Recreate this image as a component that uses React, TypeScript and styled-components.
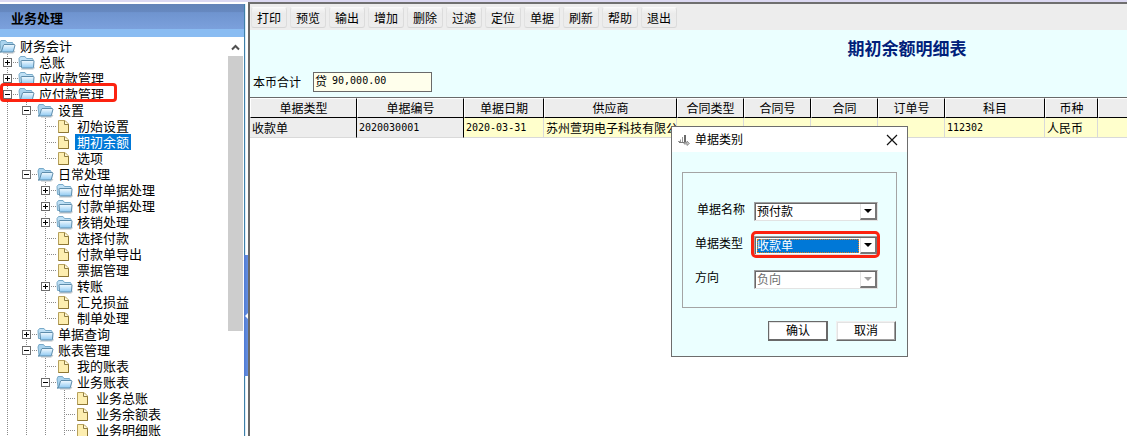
import React from "react";
import styled, { createGlobalStyle, css } from "styled-components";

const GlobalStyle = createGlobalStyle`
  * { box-sizing: border-box; }
  html, body, #root { height: 100%; }
  body {
    margin: 0;
    overflow: hidden;
    color: #000;
    background: #fff;
    font-family: "Liberation Sans", "Noto Sans CJK SC", sans-serif;
    font-size: 12px;
    line-height: 16px;
  }
  button, input, select { font: inherit; color: inherit; }
`;

const cjk = `"Noto Sans CJK SC", sans-serif`;
const mono = `"DejaVu Sans Mono", "Noto Sans CJK SC", monospace`;

const Page = styled.div`
  display: flex;
  height: 100%;
  min-height: 0;
  border-top: 2px solid #dcd9f2;
  font-family: ${cjk};
`;

/* ---------- sidebar ---------- */

const Sidebar = styled.aside`
  display: flex;
  flex: 0 0 244px;
  flex-direction: column;
  min-height: 0;
  padding-top: 2px;
`;

const SidebarTitle = styled.h2`
  flex: none;
  height: 33px;
  margin: 0;
  padding: 6px 11px;
  font-size: 13px;
  line-height: 16px;
  background: linear-gradient(#6384b8, #6688c0 24%, #6f94cf 26%, #7ba0dc 75%, #8abcf2 77%, #8abcf2);
`;

const TreePane = styled.div`
  display: flex;
  flex: 1;
  min-height: 0;
  padding-top: 1px;
`;

const Tree = styled.ul`
  flex: 1;
  min-width: 0;
  margin: 0 0 0 -1px;
  padding: 0;
  overflow: hidden;
  list-style: none;
`;

const TreeRow = styled.li`
  position: relative;
  display: flex;
  height: 16px;
  font-size: 13px;
  white-space: nowrap;
`;

const dots = "#8a8a8a";

const Guide = styled.span<{ $up?: boolean; $down?: boolean; $across?: boolean }>`
  display: grid;
  flex: 0 0 19px;
  align-items: center;
  padding-left: 4px;
  background-image:
    repeating-linear-gradient(${dots} 0 1px, transparent 1px 2px),
    repeating-linear-gradient(${dots} 0 1px, transparent 1px 2px),
    repeating-linear-gradient(90deg, ${dots} 0 1px, transparent 1px 2px);
  background-repeat: no-repeat;
  background-position: 8px 0, 8px 8px, 8px 8px;
  background-size:
    ${(p) => (p.$up ? "1px 8px" : "0 0")},
    ${(p) => (p.$down ? "1px 8px" : "0 0")},
    ${(p) => (p.$across ? "11px 1px" : "0 0")};
`;

const Toggle = styled.button`
  display: block;
  width: 9px;
  height: 9px;
  padding: 0;
  border: 0;
  background: #fff;
  svg { display: block; }
`;

const IconCell = styled.span`
  flex: 0 0 19px;
  svg { display: block; }
`;

const TreeLabel = styled.span<{ $selected?: boolean }>`
  padding: 0 2px;
  ${(p) => p.$selected && css`color: #fff; background: #0078d7;`}
`;

const RowMark = styled.span`
  position: absolute;
  z-index: 2;
  top: -3px;
  left: 1px;
  width: 117px;
  height: 19px;
  border: 3px solid #fc2310;
  border-radius: 4px;
`;

const ScrollTrack = styled.div`
  display: flex;
  flex: 0 0 16px;
  flex-direction: column;
  align-items: stretch;
  svg { display: block; height: 18px; }
`;

const ScrollThumb = styled.div`
  flex: 0 0 275px;
  margin-right: 1px;
  background: #cdcdcd;
`;

const Splitter = styled.div`
  display: flex;
  flex: 0 0 4px;
  flex-direction: column;
  margin-top: 2px;
  border-left: 1px solid #3d7fa8;
  background: linear-gradient(90deg, #dcecf8 1px, #fff 1px);
`;

const SplitterGrip = styled.button`
  display: grid;
  height: 121px;
  margin: 251px 0 0 -1px;
  padding: 0;
  place-items: center end;
  border: 0;
  background: linear-gradient(90deg, #4f7ad2, #6790e2);
`;

/* ---------- main ---------- */

const Main = styled.main`
  flex: 1;
  min-width: 0;
  overflow: hidden;
  border-top: 2px solid #6f6f6f;
  border-left: 2px solid #696969;
`;

const Toolbar = styled.nav`
  display: flex;
  gap: 3px;
  height: 26px;
  padding: 3px 1px;
  background: #ededed;
`;

const ToolButton = styled.button`
  width: 36px;
  height: 21px;
  padding: 0;
  border: 1px solid;
  border-color: #fafafa #dcdcdc #d6d6d6 #e2e2e2;
  border-radius: 3px;
  background: linear-gradient(#f6f6f6, #ebebeb 30%, #ededed);
  line-height: 16px;
`;

const Sheet = styled.div`
  min-width: 1314px;
`;

const SheetHead = styled.header`
  height: 67px;
  padding-top: 8px;
  background: #ebffff;
`;

const SheetTitle = styled.h1`
  margin: 0 0 14px;
  color: #00207a;
  font-size: 17px;
  line-height: 20px;
  text-align: center;
`;

const Summary = styled.label`
  display: flex;
  gap: 12px;
  height: 20px;
  padding-left: 3px;
  line-height: 20px;
`;

const AmountBox = styled.span`
  display: flex;
  gap: 5px;
  width: 119px;
  height: 20px;
  padding-left: 1px;
  border: 1px solid #6a6a6a;
  background: #ffffec;
  line-height: 15px;
`;

const AmountInput = styled.input`
  flex: 1;
  min-width: 0;
  height: 15px;
  padding: 0;
  border: 0;
  outline: 0;
  background: transparent;
  font-family: ${mono};
  font-size: 10px;
`;

const Grid = styled.table`
  width: 100%;
  table-layout: fixed;
  border-top: 1px solid #6a6a6a;
  border-spacing: 0;
  border-collapse: separate;
`;

const Col = styled.col<{ $width?: number }>`
  width: ${(p) => (p.$width ? `${p.$width}px` : "auto")};
`;

const HeadCell = styled.th`
  height: 20px;
  padding: 0;
  border: 1px solid;
  border-color: #fff #000 #000 #fff;
  background: #ededed;
  font-weight: 400;
  line-height: 16px;
`;

const Cell = styled.td<{ $fixed?: boolean; $code?: boolean }>`
  height: 20px;
  padding: 0 2px;
  overflow: hidden;
  border-right: 1px solid ${(p) => (p.$fixed ? "#000" : "#d9d9d9")};
  border-bottom: 1px solid #d9d9d9;
  background: ${(p) => (p.$fixed ? "#ededed" : "#ffffcc")};
  line-height: 16px;
  white-space: nowrap;
  ${(p) => p.$code && css`font-family: ${mono}; font-size: 10px;`}
`;

/* ---------- dialog ---------- */

const Dialog = styled.section`
  position: absolute;
  z-index: 5;
  top: 126px;
  left: 671px;
  width: 237px;
  border: 1px solid #6d6d6d;
  background: #ebffff;
`;

const DialogBar = styled.header`
  display: flex;
  align-items: center;
  height: 25px;
  padding: 0 9px 0 6px;
  background: #fff;
  h2 {
    flex: 1;
    margin: 0 0 0 5px;
    font-size: 12px;
    font-weight: 400;
  }
`;

const CloseButton = styled.button`
  display: grid;
  padding: 0;
  border: 0;
  background: none;
`;

const Fields = styled.div`
  display: flex;
  flex-direction: column;
  gap: 15px;
  height: 136px;
  margin: 20px 10px 13px;
  padding: 29px 18px 0 12px;
  border: 1px solid #a4a4a4;
`;

const Field = styled.div<{ $indent?: boolean }>`
  display: flex;
  align-items: flex-start;
  height: 19px;
  label {
    flex: 1;
    padding-left: ${(p) => (p.$indent ? "2px" : "0")};
  }
`;

const SelectFrame = styled.div<{ $marked?: boolean; $disabled?: boolean }>`
  position: relative;
  display: flex;
  width: 124px;
  height: 19px;
  border: 1px solid;
  border-color: #a0a0a0 #e3e3e3 #e3e3e3 #a0a0a0;
  background: #fff;
  box-shadow: inset 1px 1px 0 #696969;
  color: ${(p) => (p.$disabled ? "#6d6d6d" : "#000")};
  ${(p) =>
    p.$marked &&
    css`
      &::after {
        content: "";
        position: absolute;
        inset: -6px -3px -4px -4px;
        border: 3px solid #fc2310;
        border-radius: 5px;
        pointer-events: none;
      }
    `}
`;

const Select = styled.select<{ $active?: boolean }>`
  flex: 1;
  min-width: 0;
  margin: 2px 1px 1px 2px;
  padding: 0;
  border: 0;
  border-radius: 0;
  appearance: none;
  background: transparent;
  line-height: 14px;
  opacity: 1;
  &:disabled { color: #6d6d6d; }
  ${(p) => p.$active && css`
    color: #fff;
    background: #0078d7;
    outline: 1px dotted #e08020;
    outline-offset: -1px;
  `}
`;

const Arrow = styled.span`
  display: grid;
  flex: 0 0 17px;
  margin: 1px 0 0;
  place-items: center;
  border-right: 2px solid #777;
  border-bottom: 2px solid #777;
  border-left: 1px solid #e3e3e3;
  pointer-events: none;
`;

const Actions = styled.footer`
  display: flex;
  justify-content: flex-end;
  gap: 8px;
  padding: 0 11px 15px;
`;

const ActionButton = styled.button<{ $primary?: boolean }>`
  width: 60px;
  height: 20px;
  padding: 0;
  border: 1px solid;
  border-color: ${(p) => (p.$primary ? "#696969" : "#f0f0f0 #696969 #696969 #f0f0f0")};
  background: #fff;
  box-shadow: inset -1px -1px 0 ${(p) => (p.$primary ? "#696969" : "#a0a0a0")},
    inset 1px 1px 0 #e3e3e3;
  line-height: 16px;
`;

/* ---------- icons ---------- */

const FolderClosed = () => (
  <svg width="17" height="16" viewBox="0 0 17 16" aria-hidden="true">
    <defs>
      <linearGradient id="folderFill" x1="0" y1="0" x2="0" y2="1">
        <stop offset="0" stopColor="#f4fbff" />
        <stop offset="1" stopColor="#8cc8f2" />
      </linearGradient>
    </defs>
    <path d="M3 15h12.5l1-1.500" stroke="#b9bfc4" fill="none" />
    <path d="M1.500 12.500l-.500-8 1.500-2h4.500l1.500 2h6l.5 1v7z" fill="#bfe0f5" stroke="#78aac9" />
    <path d="M3.500 13.500l-.500-6.500q0-.500.500-.500h12q.500 0 .500.500l-.500 6.500-1 .500h-10z" fill="url(#folderFill)" stroke="#5d8cab" />
  </svg>
);

const FolderOpen = () => (
  <svg width="17" height="16" viewBox="0 0 17 16" aria-hidden="true">
    <path d="M4 15h10.500l1.500-2" stroke="#b9bfc4" fill="none" />
    <path d="M2 13l-1-8 1-2.500h4.500l1.500 2h5.500l.500 1v7z" fill="#a9d3ee" stroke="#78aac9" />
    <path d="M2.500 13.500l2-6.500.500-.500h10.500l.500.500-1.500 6-.500 1h-13z" fill="url(#folderFill)" stroke="#5d8cab" />
  </svg>
);

const FileIcon = () => (
  <svg width="17" height="16" viewBox="0 0 17 16" aria-hidden="true">
    <path d="M2.500 2.500h6.500l3.500 3.500v8.500h-10z" fill="#fdeeb0" stroke="#b7a15c" />
    <path d="M8.500 3v3.500h4" fill="#fff9dc" stroke="#8f7d42" />
    <path d="M12.500 6.500v8h-10" fill="none" stroke="#8d7634" />
  </svg>
);

const ToggleGlyph = ({ open }: { open: boolean }) => (
  <svg width="9" height="9" viewBox="0 0 9 9" aria-hidden="true">
    <rect x=".5" y=".5" width="8" height="8" fill="#fff" stroke="#6c6c6c" />
    <path d={open ? "M2 4.5h5" : "M2 4.5h5M4.500 2v5"} stroke="#000" />
  </svg>
);

const DialogIcon = () => (
  <svg width="12" height="13" viewBox="0 0 12 13" aria-hidden="true">
    <path d="M0 8.500h2M2.500 6.500v2.500M4.500 4v5" stroke="#9a9a9a" />
    <path d="M7 2v7" stroke="#6a6a6a" strokeWidth="2" />
    <path d="M1 9.500h6" stroke="#777" />
    <path d="M6 9.500h3v-1.500l2.500 2.500-2.500 2v-1.500H6z" fill="#c4c4c4" stroke="#7c7c7c" strokeWidth=".7" />
  </svg>
);

/* ---------- data ---------- */

type Kind = "closed" | "open" | "file";
type Node = { label: string; level: number; kind: Kind; selected?: boolean; marked?: boolean };

const nodes: Node[] = [
  { label: "财务会计", level: 0, kind: "open" },
  { label: "总账", level: 1, kind: "closed" },
  { label: "应收款管理", level: 1, kind: "closed" },
  { label: "应付款管理", level: 1, kind: "open", marked: true },
  { label: "设置", level: 2, kind: "open" },
  { label: "初始设置", level: 3, kind: "file" },
  { label: "期初余额", level: 3, kind: "file", selected: true },
  { label: "选项", level: 3, kind: "file" },
  { label: "日常处理", level: 2, kind: "open" },
  { label: "应付单据处理", level: 3, kind: "closed" },
  { label: "付款单据处理", level: 3, kind: "closed" },
  { label: "核销处理", level: 3, kind: "closed" },
  { label: "选择付款", level: 3, kind: "file" },
  { label: "付款单导出", level: 3, kind: "file" },
  { label: "票据管理", level: 3, kind: "file" },
  { label: "转账", level: 3, kind: "closed" },
  { label: "汇兑损益", level: 3, kind: "file" },
  { label: "制单处理", level: 3, kind: "file" },
  { label: "单据查询", level: 2, kind: "closed" },
  { label: "账表管理", level: 2, kind: "open" },
  { label: "我的账表", level: 3, kind: "file" },
  { label: "业务账表", level: 3, kind: "open" },
  { label: "业务总账", level: 4, kind: "file" },
  { label: "业务余额表", level: 4, kind: "file" },
  { label: "业务明细账", level: 4, kind: "file" },
];

/* Whether a branch line at this level carries on below the given row. */
const continues = (index: number, level: number) => {
  const next = nodes.slice(index + 1).find((n) => n.level <= level);
  return next ? next.level === level : true;
};

const tools = ["打印", "预览", "输出", "增加", "删除", "过滤", "定位", "单据", "刷新", "帮助", "退出"];

const columns: { title: string; width?: number; value: string; fixed?: boolean; code?: boolean }[] = [
  { title: "单据类型", width: 107, value: "收款单", fixed: true },
  { title: "单据编号", width: 107, value: "2020030001", fixed: true, code: true },
  { title: "单据日期", width: 80, value: "2020-03-31", code: true },
  { title: "供应商", width: 133, value: "苏州萱玥电子科技有限公司" },
  { title: "合同类型", width: 67, value: "" },
  { title: "合同号", width: 67, value: "" },
  { title: "合同", width: 67, value: "" },
  { title: "订单号", width: 67, value: "" },
  { title: "科目", width: 100, value: "112302", code: true },
  { title: "币种", width: 53, value: "人民币" },
  { title: "", value: "" },
];

const fields = [
  { id: "name", label: "单据名称", value: "预付款", indent: true },
  { id: "type", label: "单据类型", value: "收款单", active: true },
  { id: "direction", label: "方向", value: "负向", disabled: true },
];

const TreeItem = ({ node, index }: { node: Node; index: number }) => (
  <TreeRow>
    {Array.from({ length: node.level }, (_, i) => {
      const own = i === node.level - 1;
      const down = continues(index, i + 1);
      return (
        <Guide key={i} $up={own || down} $down={down} $across={own}>
          {own && node.kind !== "file" && (
            <Toggle aria-label={node.label}>
              <ToggleGlyph open={node.kind === "open"} />
            </Toggle>
          )}
        </Guide>
      );
    })}
    <IconCell>
      {node.kind === "file" ? <FileIcon /> : node.kind === "open" ? <FolderOpen /> : <FolderClosed />}
    </IconCell>
    <TreeLabel $selected={node.selected}>{node.label}</TreeLabel>
    {node.marked && <RowMark />}
  </TreeRow>
);

export default function App() {
  return (
    <>
      <GlobalStyle />
      <Page>
        <Sidebar>
          <SidebarTitle>业务处理</SidebarTitle>
          <TreePane>
            <Tree>
              {nodes.map((node, i) => (
                <TreeItem key={node.label} node={node} index={i} />
              ))}
            </Tree>
            <ScrollTrack>
              <svg width="15" viewBox="0 0 15 18" aria-hidden="true">
                <path d="M4 11.500l3.500-3.500 3.500 3.500" fill="none" stroke="#505050" strokeWidth="2" />
              </svg>
              <ScrollThumb />
            </ScrollTrack>
          </TreePane>
        </Sidebar>
        <Splitter>
          <SplitterGrip aria-label="收起">
            <svg width="3" height="6" viewBox="0 0 3 6" aria-hidden="true">
              <path d="M3 0v6L0 3z" fill="#fff" />
            </svg>
          </SplitterGrip>
        </Splitter>
        <Main>
          <Toolbar>
            {tools.map((t) => (
              <ToolButton key={t}>{t}</ToolButton>
            ))}
          </Toolbar>
          <Sheet>
            <SheetHead>
              <SheetTitle>期初余额明细表</SheetTitle>
              <Summary>
                本币合计
                <AmountBox>
                  贷
                  <AmountInput defaultValue="90,000.00" />
                </AmountBox>
              </Summary>
            </SheetHead>
            <Grid>
              <colgroup>
                {columns.map((c, i) => (
                  <Col key={i} $width={c.width} />
                ))}
              </colgroup>
              <thead>
                <tr>
                  {columns.map((c, i) => (
                    <HeadCell key={i}>{c.title}</HeadCell>
                  ))}
                </tr>
              </thead>
              <tbody>
                <tr>
                  {columns.map((c, i) => (
                    <Cell key={i} $fixed={c.fixed} $code={c.code}>
                      {c.value}
                    </Cell>
                  ))}
                </tr>
              </tbody>
            </Grid>
          </Sheet>
        </Main>
      </Page>
      <Dialog role="dialog" aria-labelledby="dialog-title">
        <DialogBar>
          <DialogIcon />
          <h2 id="dialog-title">单据类别</h2>
          <CloseButton aria-label="关闭">
            <svg width="12" height="12" viewBox="0 0 12 12" aria-hidden="true">
              <path d="M1 1l10 10M11 1L1 11" stroke="#111" strokeWidth="1.200" />
            </svg>
          </CloseButton>
        </DialogBar>
        <Fields>
          {fields.map((f) => (
            <Field key={f.id} $indent={f.indent}>
              <label htmlFor={f.id}>{f.label}</label>
              <SelectFrame $marked={f.active} $disabled={f.disabled}>
                <Select id={f.id} $active={f.active} disabled={f.disabled} defaultValue={f.value}>
                  <option>{f.value}</option>
                </Select>
                <Arrow>
                  <svg width="8" height="4" viewBox="0 0 8 4" aria-hidden="true">
                    <path d="M0 0h8L4 4z" fill={f.disabled ? "#a0a0a0" : "#000"} />
                  </svg>
                </Arrow>
              </SelectFrame>
            </Field>
          ))}
        </Fields>
        <Actions>
          <ActionButton $primary>确认</ActionButton>
          <ActionButton>取消</ActionButton>
        </Actions>
      </Dialog>
    </>
  );
}
